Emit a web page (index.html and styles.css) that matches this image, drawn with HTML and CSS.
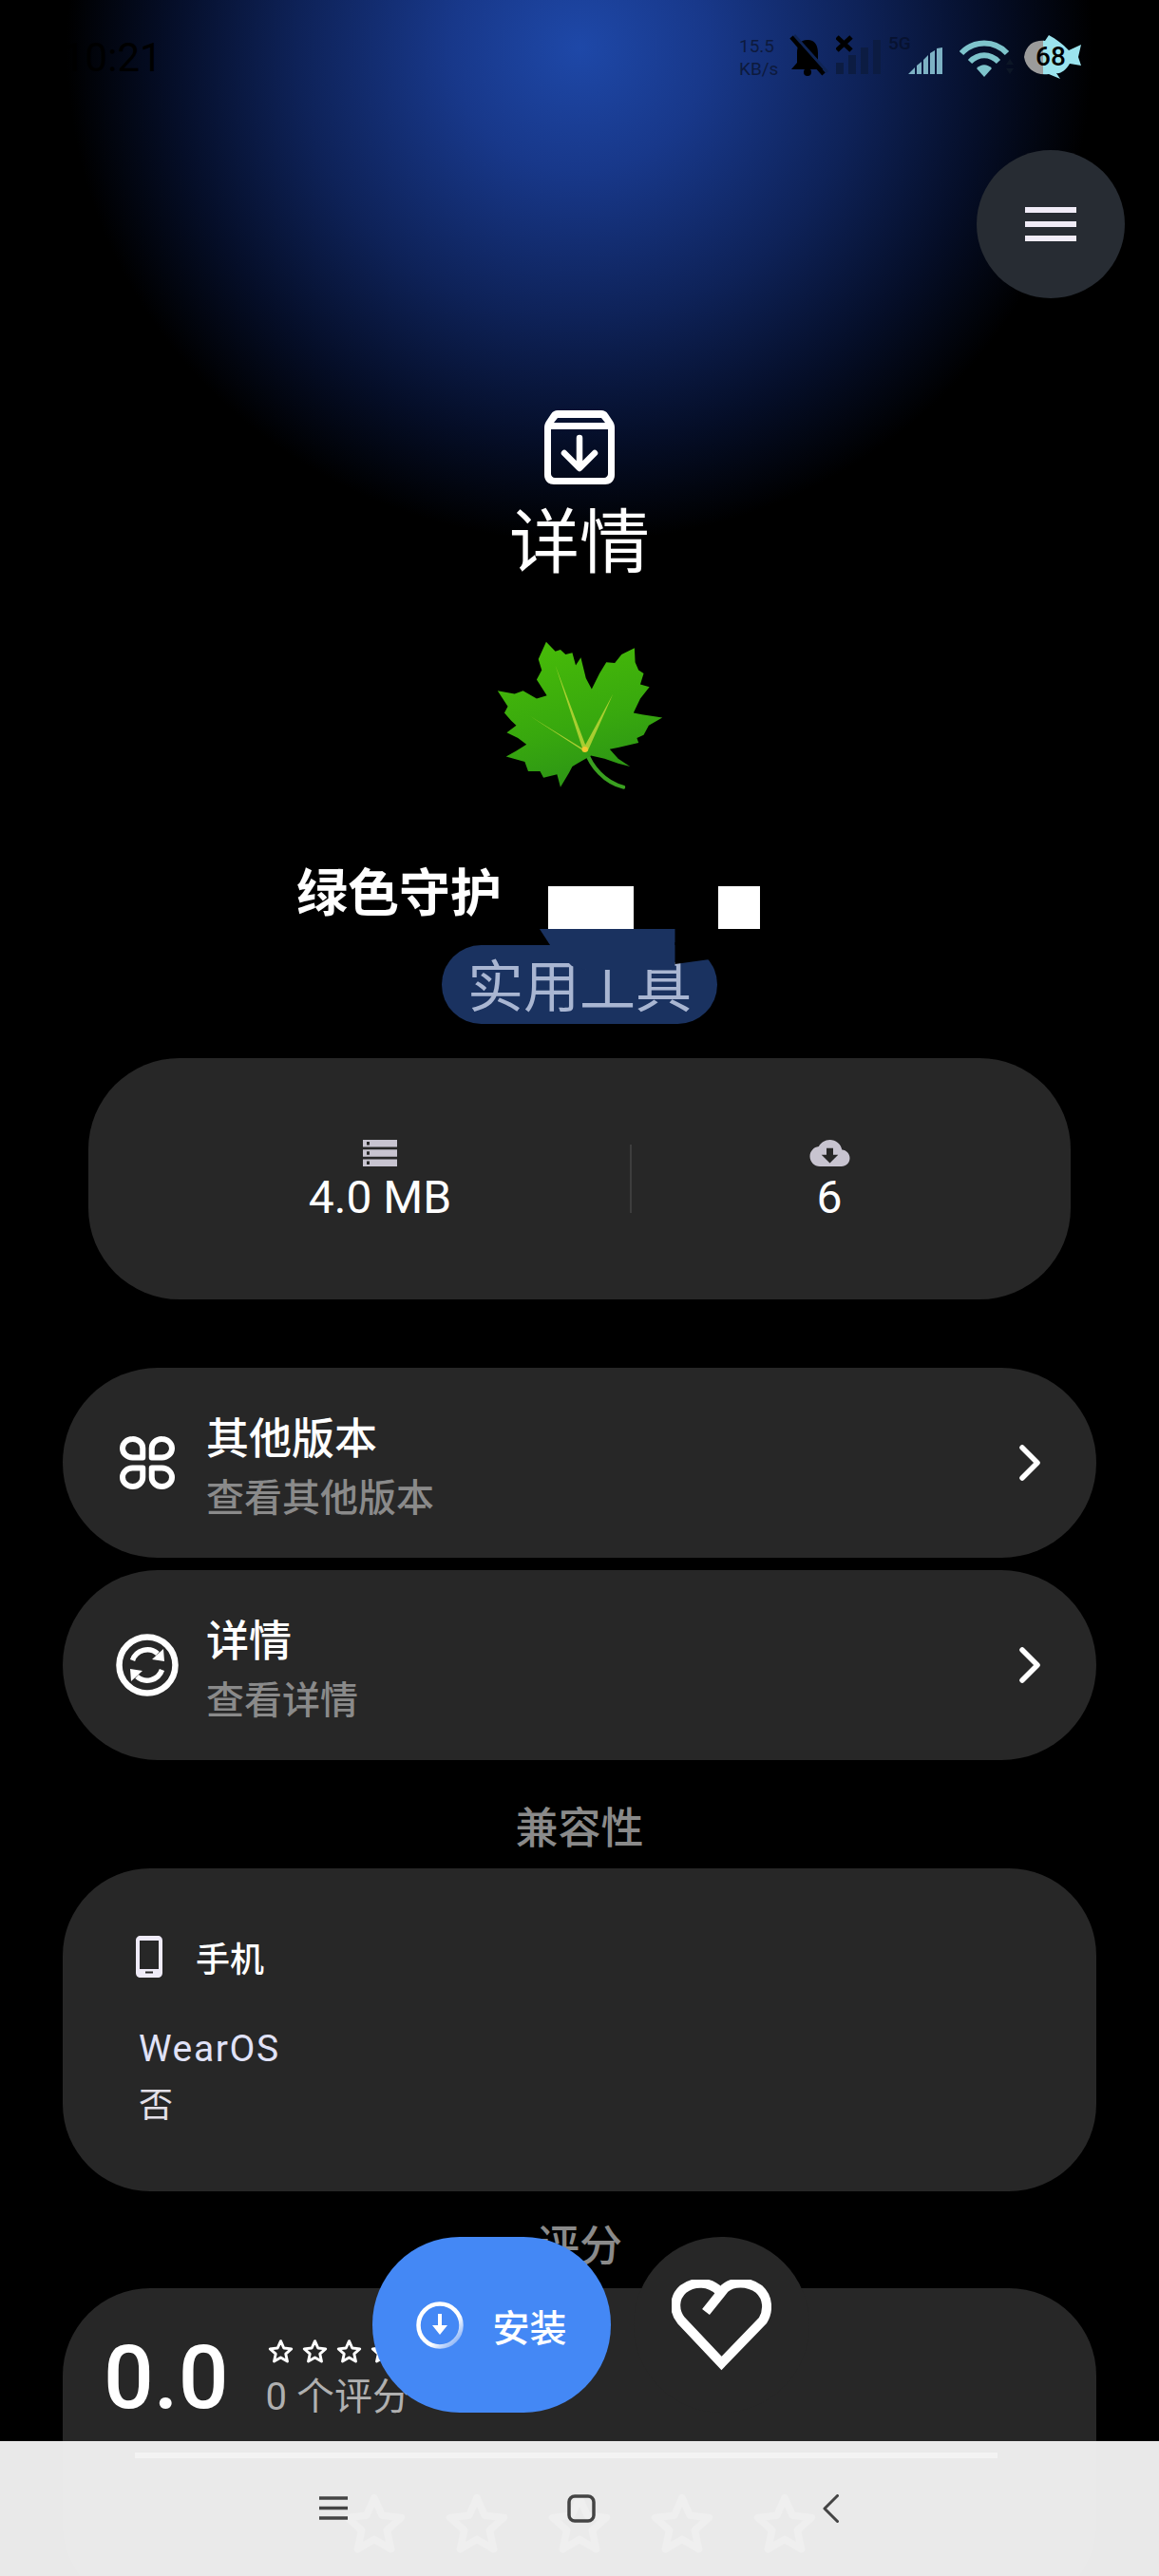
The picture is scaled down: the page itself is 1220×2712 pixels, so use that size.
FILE: index.html
```html
<!DOCTYPE html>
<html lang="zh-CN">

<head>
  <meta charset="UTF-8">
  <meta name="viewport" content="width=device-width, initial-scale=1.0">
  <title>详情</title>
  <link rel="stylesheet" href="styles.css">
</head>

<body>
  <svg class="defs" width="0" height="0">
    <symbol id="star" viewBox="0 0 24 24">
      <polygon points="12,2.4 14.9,8.9 22,9.7 16.7,14.4 18.2,21.4 12,17.8 5.8,21.4 7.3,14.4 2,9.7 9.1,8.9" fill="none" stroke="currentColor" stroke-linejoin="round" />
    </symbol>
    <symbol id="chevron" viewBox="0 0 22 38">
      <polyline points="3,3 19,19 3,35" fill="none" stroke="#fff" stroke-width="5.5" stroke-linecap="round" stroke-linejoin="round" />
    </symbol>
  </svg>

  <div class="page">
    <div class="statusbar">
      <span class="time">10:21</span>
      <div class="status-icons">
        <div class="speed"><span>15.5</span><span>KB/s</span></div>
        <svg class="st-bell" viewBox="0 0 50 50">
          <path d="M20 6C12 6 9 12 9 20V30L3 37H37L31 30V20C31 12 28 6 20 6Z" fill="#000" />
          <circle cx="20" cy="40" r="4" fill="#000" />
          <line x1="6" y1="1" x2="41" y2="40" stroke="#0f2454" stroke-width="3" />
          <line x1="3" y1="3" x2="37" y2="42" stroke="#000" stroke-width="4.5" />
        </svg>
        <svg class="st-sim1" viewBox="0 0 55 50">
          <rect x="0" y="30" width="8" height="12" fill="#0c1c42" />
          <rect x="13" y="22" width="8" height="20" fill="#0c1c42" />
          <rect x="26" y="14" width="8" height="28" fill="#0c1c42" />
          <rect x="39" y="6" width="8" height="36" fill="#0c1c42" />
          <path d="M1 3L16 17M16 3L1 17" stroke="#000" stroke-width="5" />
        </svg>
        <div class="st-sim2">
          <span>5G</span>
          <svg viewBox="0 0 75 50">
            <path d="M21 42L28 35V42ZM30 33L35 29V42H30ZM37 27L42 22V42H37ZM44 20L49 17V42H44ZM51 15L57 14V42H51Z" fill="#7db2c4" />
          </svg>
        </div>
        <svg class="st-wifi" viewBox="0 0 68 50">
          <path d="M2 20C15 6 37 6 50 20M11 29C20 20 32 20 41 29" fill="none" stroke="#7ec4cc" stroke-width="6" />
          <path d="M18 36C23 31 29 31 34 36L26 45Z" fill="#7ec4cc" />
          <path d="M49 32L53 26L57 32ZM49 36L53 42L57 36Z" fill="#0c1626" />
        </svg>
        <div class="st-fish">
          <svg viewBox="0 0 60 48">
            <defs>
              <linearGradient id="fish">
                <stop offset="0.34" stop-color="#9b9b9b" />
                <stop offset="0.34" stop-color="#9ce4ee" />
              </linearGradient>
            </defs>
            <path d="M0 24C2 10 12 6 22 7L26 1C34 5 40 10 47 17L60 11L57 24L60 33L48 31C44 38 38 42 34 41L38 47L26 42C12 44 2 36 0 24Z" fill="url(#fish)" />
          </svg>
          <span>68</span>
        </div>
      </div>
    </div>

    <div class="topbar">
      <button class="menu-btn">
        <span></span><span></span><span></span>
      </button>
    </div>

    <div class="hero">
      <svg class="hero-icon" viewBox="0 0 74 78">
        <path d="M14 0H60C63 0 65 1 67 4L71 10C73 13 74 15 74 18V68C74 74 70 78 64 78H10C4 78 0 74 0 68V18C0 15 1 13 3 10L7 4C9 1 11 0 14 0ZM14 8L10 13H64L60 8ZM7 20V67C7 69 9 71 11 71H63C65 71 67 69 67 67V20Z" fill="#fff" fill-rule="evenodd" />
        <path d="M37 29V60M21 45L37 61L53 45" fill="none" stroke="#fff" stroke-width="6.5" stroke-linecap="round" stroke-linejoin="round" />
      </svg>
      <h1 class="hero-title">详情</h1>
      <svg class="leaf" viewBox="680 790 495 478" preserveAspectRatio="none">
        <defs>
          <linearGradient id="leafFill" x1="0.2" y1="0" x2="0.5" y2="1">
            <stop offset="0" stop-color="#48bc08" />
            <stop offset="0.6" stop-color="#38a80e" />
            <stop offset="1" stop-color="#2c9416" />
          </linearGradient>
        </defs>
        <path d="M945 1140C960 1190 1000 1240 1055 1255" fill="none" stroke="#3aa020" stroke-width="12" stroke-linecap="round" />
        <polygon fill="url(#leafFill)" points="828,795 855,825 870,820 885,835 905,830 915,870 930,845 945,910 962,945 985,895 1005,860 1030,862 1050,835 1088,815 1090,860 1100,885 1115,895 1105,930 1132,938 1105,975 1085,1020 1110,1025 1170,1035 1130,1060 1115,1090 1095,1100 1100,1115 1040,1130 1015,1135 1040,1165 1075,1190 1040,1180 1000,1165 960,1155 920,1180 905,1190 895,1210 870,1255 860,1215 820,1225 810,1205 775,1205 765,1175 710,1158 740,1140 770,1120 745,1100 712,1082 740,1060 725,1045 705,1020 715,1000 685,950 735,960 760,950 800,975 830,965 800,915 815,885 805,850" />
        <path d="M855 870L937 1140H950ZM1025 960L936 1136L950 1142ZM780 1030L934 1132L946 1146Z" fill="#c4d83a" fill-opacity="0.8" />
        <circle cx="942" cy="1136" r="9" fill="#f2c830" />
      </svg>
      <div class="name-row">
        <span class="app-name">绿色守护</span>
        <span class="mask mask-wide"></span>
        <span class="mask mask-small"></span>
      </div>
      <div class="chip">
        <span>实用工具</span>
        <svg class="chip-patch" viewBox="0 0 195 50">
          <polygon points="0,0 142.5,0 142.5,43 48.5,43 34,39 11,17" fill="#1a3260" />
          <polygon points="142.5,14 195,14 195,31 179,32 142.5,37" fill="#000" />
        </svg>
      </div>
    </div>

    <div class="stats">
      <div class="stat">
        <svg class="stat-server" viewBox="0 0 36 28">
          <path d="M0 0H36V7.5H0ZM0 10.2H36V17.8H0ZM0 20.5H36V28H0Z" fill="#c8c4d0" />
          <path d="M4 2H7V5.5H4ZM4 12.2H7V15.8H4ZM4 22.5H7V26H4Z" fill="#272727" />
        </svg>
        <span>4.0 MB</span>
      </div>
      <div class="stat-divider"></div>
      <div class="stat">
        <svg class="stat-cloud" viewBox="0 4 24 16">
          <path d="M19.35 10.04C18.67 6.59 15.64 4 12 4 9.11 4 6.6 5.64 5.35 8.04 2.34 8.36 0 10.91 0 14c0 3.31 2.69 6 6 6h13c2.76 0 5-2.24 5-5 0-2.64-2.05-4.78-4.65-4.96zM17 13l-5 5-5-5h3V9h4v4h3z" fill="#c8c4d0" fill-rule="evenodd" />
        </svg>
        <span>6</span>
      </div>
    </div>

    <div class="rows">
      <div class="row">
        <svg class="row-icon" viewBox="0 0 66 56">
          <g fill="none" stroke="#fff" stroke-width="6" stroke-linejoin="round">
            <path id="petal" d="M17.5 3A10.5 9.75 0 0 0 7 12.75A10.5 9.75 0 0 0 17.5 22.5H28.25V12.75A10.5 9.75 0 0 0 17.5 3Z" />
            <use href="#petal" transform="matrix(-1 0 0 1 66 0)" />
            <use href="#petal" transform="matrix(1 0 0 -1 0 56)" />
            <use href="#petal" transform="matrix(-1 0 0 -1 66 56)" />
          </g>
        </svg>
        <div class="row-text">
          <div class="row-title">其他版本</div>
          <div class="row-sub">查看其他版本</div>
        </div>
        <svg class="row-chevron"><use href="#chevron" /></svg>
      </div>
      <div class="row">
        <svg class="row-icon" viewBox="0 0 66 66">
          <circle cx="33" cy="33" r="29.5" fill="none" stroke="#fff" stroke-width="6.5" />
          <path d="M17.5 28A16.5 16.5 0 0 1 44 21M48.5 38A16.5 16.5 0 0 1 22 45" fill="none" stroke="#fff" stroke-width="5.5" />
          <path d="M38 27L51 29L50 16ZM28 39L15 37L16 50Z" fill="#fff" />
        </svg>
        <div class="row-text">
          <div class="row-title">详情</div>
          <div class="row-sub">查看详情</div>
        </div>
        <svg class="row-chevron"><use href="#chevron" /></svg>
      </div>
    </div>

    <h2 class="section-title compat-title">兼容性</h2>
    <div class="card compat">
      <div class="device">
        <svg class="device-icon" viewBox="0 0 28 44">
          <path d="M5 0H23C26 0 28 2 28 5V39C28 42 26 44 23 44H5C2 44 0 42 0 39V5C0 2 2 0 5 0ZM4 5V35H24V5ZM10 37.5V39.5H18V37.5Z" fill="#efebf8" fill-rule="evenodd" />
        </svg>
        <span>手机</span>
      </div>
      <div class="wear-label">WearOS</div>
      <div class="wear-value">否</div>
    </div>

    <h2 class="section-title rating-title">评分</h2>
    <div class="card rating">
      <div class="rating-top">
        <span class="rating-score">0.0</span>
        <div class="rating-info">
          <div class="small-stars">
            <svg><use href="#star" /></svg>
            <svg><use href="#star" /></svg>
            <svg><use href="#star" /></svg>
            <svg><use href="#star" /></svg>
            <svg><use href="#star" /></svg>
          </div>
          <div class="rating-count">0 个评分</div>
        </div>
      </div>
      <div class="rating-line"></div>
      <div class="big-stars">
        <svg><use href="#star" /></svg>
        <svg><use href="#star" /></svg>
        <svg><use href="#star" /></svg>
        <svg><use href="#star" /></svg>
        <svg><use href="#star" /></svg>
      </div>
    </div>

    <button class="install">
      <svg class="install-icon" viewBox="0 0 50 50">
        <defs>
          <linearGradient id="ring" x1="0.2" y1="0.2" x2="0.9" y2="0.9">
            <stop offset="0.6" stop-color="#fff" />
            <stop offset="1" stop-color="#8fb6f8" />
          </linearGradient>
        </defs>
        <circle cx="25" cy="25" r="22.5" fill="none" stroke="url(#ring)" stroke-width="4.5" />
        <path d="M23 13H27V25H33L25 35L17 25H23Z" fill="#fff" />
      </svg>
      <span>安装</span>
    </button>

    <button class="fav">
      <svg viewBox="0 0 105 96">
        <path d="M36 34L56 9C64 2 80 1 92 10C102 19 102 33 96 43L52.5 88L10 43C2 33 2 19 12 10C24 1 40 2 50 12" fill="none" stroke="#fff" stroke-width="10" stroke-miterlimit="6" />
      </svg>
    </button>

    <div class="navbar">
      <svg class="nav-menu" viewBox="0 0 30 25">
        <path d="M0 2H30M0 12.5H30M0 23H30" stroke="#444" stroke-width="3.5" />
      </svg>
      <svg class="nav-home" viewBox="0 0 30 30">
        <rect x="2" y="2" width="26" height="26" rx="6" fill="none" stroke="#444" stroke-width="3.5" />
      </svg>
      <svg class="nav-back" viewBox="0 0 17 30">
        <polyline points="15.5,1.5 2,15 15.5,28.5" fill="none" stroke="#444" stroke-width="3" stroke-linecap="round" stroke-linejoin="round" />
      </svg>
    </div>
  </div>
</body>

</html>
```

FILE: styles.css
```css
* {
  box-sizing: border-box;
}

body {
  margin: 0;
  background: #000;
  font-family: Roboto, "Noto Sans CJK SC", sans-serif;
  color: #fff;
}

button {
  font-family: inherit;
  border: none;
  padding: 0;
}

h1,
h2 {
  margin: 0;
  font-weight: 400;
}

.defs {
  position: absolute;
}

.page {
  position: relative;
  width: 1220px;
  height: 2712px;
  overflow: hidden;
  background: radial-gradient(ellipse 540px 520px at 610px 50px, #1e48a8 0%, #18388a 25%, #0e2258 55%, #050e28 80%, #000 100%);
}

/* status bar */
.statusbar {
  display: flex;
  justify-content: space-between;
  height: 90px;
  padding: 36px 82px 0 66px;
}

.time {
  font-size: 42px;
  line-height: 50px;
  color: #000;
}

.status-icons {
  display: flex;
  height: 50px;
}

.status-icons svg {
  display: block;
  height: 50px;
}

.speed {
  display: flex;
  flex-direction: column;
  width: 52px;
  font-size: 19px;
  line-height: 24px;
  color: #0d1a3d;
  padding-top: 1px;
}

.st-bell {
  width: 50px;
}

.st-sim1 {
  width: 55px;
}

.st-sim2 {
  position: relative;
  width: 75px;
}

.st-sim2 svg {
  width: 75px;
}

.st-sim2 span {
  position: absolute;
  left: 0;
  top: 0;
  font-size: 19px;
  line-height: 20px;
  font-weight: 500;
  color: #071230;
}

.st-wifi {
  width: 68px;
}

.st-fish {
  position: relative;
  width: 60px;
}

.st-fish svg {
  width: 60px;
  height: 48px;
}

.st-fish span {
  position: absolute;
  left: 12px;
  top: 7px;
  font-size: 28px;
  line-height: 34px;
  font-weight: 500;
  color: #000;
}

/* menu */
.topbar {
  display: flex;
  justify-content: flex-end;
  padding: 68px 36px 0 0;
}

.menu-btn {
  display: flex;
  flex-direction: column;
  align-items: center;
  justify-content: center;
  gap: 9px;
  width: 156px;
  height: 156px;
  border-radius: 50%;
  background: #272c33;
}

.menu-btn span {
  width: 54px;
  height: 6px;
  background: #f0ecf8;
}

/* hero */
.hero {
  display: flex;
  flex-direction: column;
  align-items: center;
  padding-top: 118px;
}

.hero-icon {
  display: block;
  width: 74px;
  height: 78px;
}

.hero-title {
  font-size: 74px;
  line-height: 84px;
  margin-top: 20px;
}

.leaf {
  display: block;
  width: 177px;
  height: 159px;
  margin-top: 60px;
}

.name-row {
  display: flex;
  align-items: flex-start;
  align-self: flex-start;
  height: 83px;
  margin-top: 73px;
  padding-left: 312px;
}

.app-name {
  width: 265px;
  margin-top: 5px;
  font-size: 54px;
  line-height: 62px;
  font-weight: 700;
  white-space: nowrap;
}

.mask {
  height: 45px;
  margin-top: 27px;
  background: #fff;
}

.mask-wide {
  width: 90px;
}

.mask-small {
  width: 44px;
  margin-left: 89px;
}

.chip {
  position: relative;
  display: flex;
  align-items: center;
  justify-content: center;
  width: 290px;
  height: 83px;
  margin-top: 6px;
  padding-top: 6px;
  border-radius: 42px;
  background: #1a3260;
  color: #a9b6d2;
  font-size: 59px;
  line-height: 70px;
}

.chip-patch {
  position: absolute;
  left: 103px;
  top: -17px;
  width: 195px;
  height: 50px;
}

/* stats card */
.stats {
  display: grid;
  grid-template-columns: 526px 2px 1fr;
  height: 254px;
  margin: 36px 93px 0;
  padding: 86px 46px 0 44px;
  border-radius: 96px;
  background: #272727;
}

.stat {
  display: flex;
  flex-direction: column;
  align-items: center;
  gap: 10px;
  font-size: 48px;
  line-height: 46px;
}

.stat-server {
  display: block;
  width: 36px;
  height: 28px;
}

.stat-cloud {
  display: block;
  width: 43px;
  height: 28px;
}

.stat-divider {
  height: 72px;
  margin-top: 5px;
  background: #3d3d3d;
}

/* list rows */
.rows {
  display: flex;
  flex-direction: column;
  gap: 13px;
  margin: 72px 66px 0;
}

.row {
  display: flex;
  align-items: center;
  height: 200px;
  padding: 0 59px 0 56px;
  border-radius: 100px;
  background: #272727;
}

.row-icon {
  display: block;
  flex: 0 0 66px;
  height: 66px;
  margin-right: 29px;
}

.row-text {
  flex: 1;
  padding-top: 14px;
}

.row-title {
  font-size: 45px;
  line-height: 62px;
  font-weight: 500;
}

.row-sub {
  font-size: 40px;
  line-height: 62px;
  font-weight: 500;
  color: #8a8a8a;
}

.row-chevron {
  display: block;
  width: 22px;
  height: 38px;
}

.section-title {
  font-size: 45px;
  line-height: 58px;
  font-weight: 500;
  text-align: center;
  color: #8a8a8a;
}

.compat-title {
  margin-top: 44px;
  margin-bottom: 12px;
}

/* cards */
.card {
  margin: 0 66px;
  border-radius: 92px;
  background: #272727;
}

.compat {
  height: 340px;
  padding: 71px 0 0 77px;
}

.device {
  display: flex;
  align-items: center;
  gap: 35px;
  height: 44px;
  font-size: 36px;
  font-weight: 500;
}

.device-icon {
  display: block;
  width: 28px;
  height: 44px;
}

.wear-label {
  margin: 50px 0 0 3px;
  font-size: 39px;
  line-height: 50px;
  letter-spacing: 1.6px;
  color: #e0e2f8;
}

.wear-value {
  margin-left: 3px;
  font-size: 36px;
  line-height: 70px;
  color: #e4e0e8;
}

.rating-title {
  margin-top: 30px;
  margin-bottom: 14px;
}

.rating {
  height: 340px;
  padding-top: 55px;
}

.rating-top {
  display: flex;
  align-items: center;
  height: 80px;
  padding-left: 43px;
  gap: 39px;
}

.rating-score {
  font-size: 93px;
  line-height: 80px;
  font-weight: 500;
}

.small-stars {
  display: flex;
  gap: 9px;
  height: 27px;
  margin-left: 2px;
  color: #fff;
}

.small-stars svg {
  width: 27px;
  height: 27px;
  stroke-width: 2.6;
}

.rating-count {
  margin-top: 12px;
  font-size: 40px;
  line-height: 46px;
  color: #b0b0b0;
}

.rating-line {
  height: 6px;
  margin: 38px 104px 0 76px;
  background: #fff;
}

.big-stars {
  display: flex;
  justify-content: center;
  gap: 40px;
  margin-top: 35px;
  color: #8e8e8e;
}

.big-stars svg {
  width: 68px;
  height: 68px;
  stroke-width: 2.7;
}

/* floating buttons */
.install {
  position: absolute;
  left: 392px;
  top: 2355px;
  display: flex;
  align-items: center;
  justify-content: center;
  gap: 30px;
  width: 251px;
  height: 185px;
  border-radius: 92px;
  background: #4488f5;
  color: #fff;
  font-size: 39px;
  font-weight: 500;
}

.install-icon {
  display: block;
  width: 50px;
  height: 50px;
}

.fav {
  position: absolute;
  left: 667px;
  top: 2355px;
  display: flex;
  align-items: center;
  justify-content: center;
  width: 185px;
  height: 185px;
  border-radius: 50%;
  background: #272727;
}

.fav svg {
  display: block;
  width: 105px;
  height: 96px;
}

/* navigation bar */
.navbar {
  position: absolute;
  left: 0;
  right: 0;
  bottom: 0;
  display: flex;
  align-items: flex-start;
  height: 142px;
  padding: 56px 0 0 336px;
  background: rgba(242, 242, 242, 0.96);
}

.navbar svg {
  display: block;
}

.nav-menu {
  width: 30px;
  height: 25px;
  margin-top: 2px;
}

.nav-home {
  width: 30px;
  height: 30px;
  margin-left: 231px;
}

.nav-back {
  width: 17px;
  height: 30px;
  margin-left: 239px;
}
```
